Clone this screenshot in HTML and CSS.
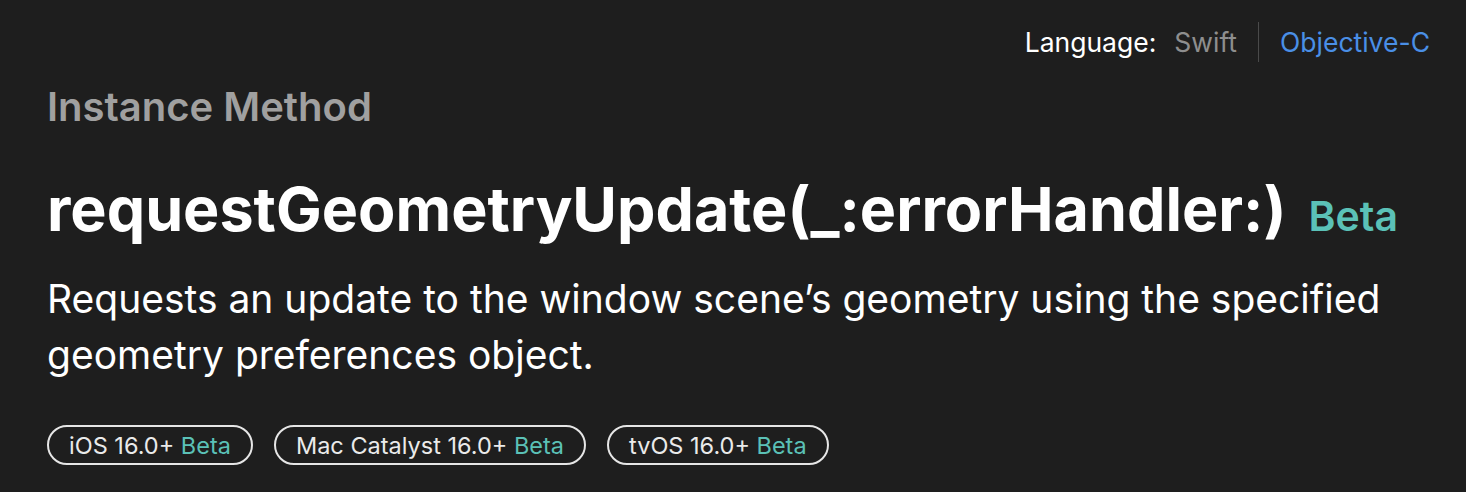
FILE: index.html
```html
<!DOCTYPE html>
<html>
<head>
<meta charset="utf-8">
<link rel="stylesheet" href="styles.css">
</head>
<body>
<div class="page">
  <div class="topbar">
    <span class="lang-label">Language:</span>
    <span class="lang-opt swift">Swift</span>
    <span class="divider"></span>
    <span class="lang-opt objc">Objective-C</span>
  </div>
  <div class="eyebrow">Instance Method</div>
  <h1 class="title">requestGeometryUpdate(_:errorHandler:)<span class="beta">Beta</span></h1>
  <p class="abstract">Requests an update to the window scene’s geometry using the specified geometry preferences object.</p>
  <div class="badges">
    <span class="badge">iOS 16.0+ <span class="b">Beta</span></span>
    <span class="badge">Mac Catalyst 16.0+ <span class="b">Beta</span></span>
    <span class="badge">tvOS 16.0+ <span class="b">Beta</span></span>
  </div>
</div>
</body>
</html>
```
FILE: styles.css
```css
html, body {
  margin: 0;
  padding: 0;
  background: #1e1e1e;
  height: 100%;
}
.page {
  font-family: Inter, "Noto Sans", sans-serif;
  color: #fff;
  padding: 0 36px 0 47px;
  width: 1466px;
  box-sizing: border-box;
}
.topbar {
  display: flex;
  justify-content: flex-end;
  align-items: center;
  height: 40px;
  line-height: 40px;
  padding-top: 22px;
  font-size: 26.5px;
}
.lang-label { color: #fff; margin-right: 18px; }
.swift { color: #8e8e8e; }
.divider {
  width: 1px;
  height: 40px;
  background: #4a4a4a;
  margin: 0 21px;
}
.objc { color: #4a8fe6; }
.eyebrow {
  margin-top: 21px;
  font-size: 40px;
  font-weight: 600;
  color: #a0a0a0;
  line-height: 48px;
}
.title {
  margin: 43px 0 0;
  font-size: 61px;
  font-weight: 700;
  line-height: 70px;
}
.beta {
  color: #5bc1b7;
  font-size: 41px;
  font-weight: 600;
  margin-left: 22px;
}
.abstract {
  margin: 20px 0 0;
  font-size: 39px;
  line-height: 56px;
  font-weight: 400;
  width: 1380px;
}
.badges {
  display: flex;
  gap: 21px;
  margin-top: 42px;
}
.badge {
  display: inline-flex;
  align-items: center;
  height: 40px;
  box-sizing: border-box;
  border: 2px solid #e6e6e6;
  border-radius: 20px;
  padding: 0 20px;
  font-size: 23.5px;
  color: #eaeaea;
  white-space: pre;
}
.badge .b { color: #5bc1b7; }
```
